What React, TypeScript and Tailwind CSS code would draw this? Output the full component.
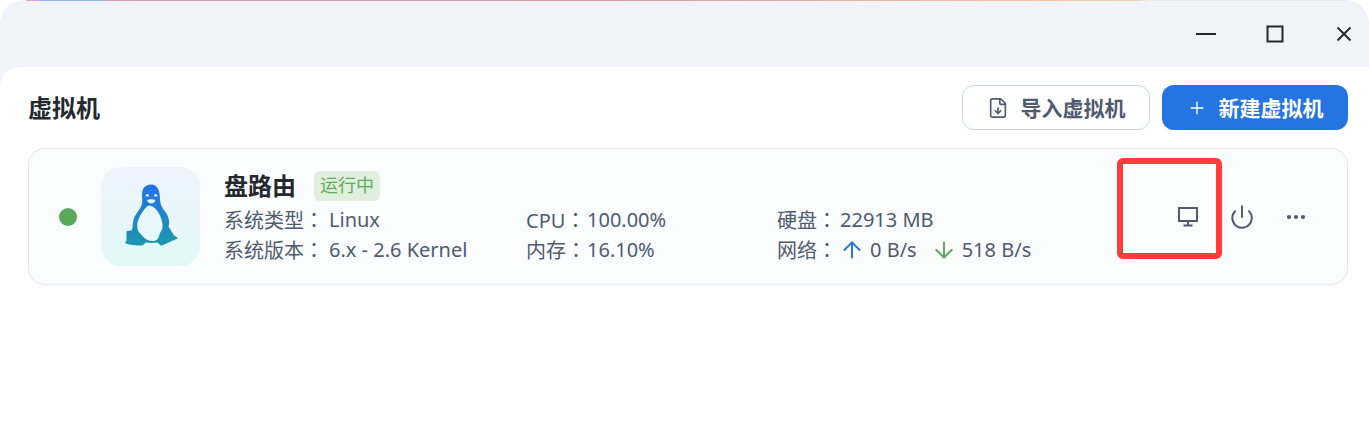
import { ArrowDown, ArrowUp, FileDown, MoreHorizontal, Plus, Power } from "lucide-react";

const FONT = "font-['Noto_Sans','Noto_Sans_CJK_SC',sans-serif]";

function PenguinIcon() {
  return (
    <svg width="70" height="75" viewBox="0 -0.5 70 75">
      <defs>
        <linearGradient id="penguin" x1="0" y1="0" x2="0" y2="1">
          <stop offset="0" stopColor="#2273e6" />
          <stop offset="1" stopColor="#1c97ae" />
        </linearGradient>
      </defs>
      <path
        fill="url(#penguin)"
        d="M35 5C28 5 26 10 26 16C26 20 27 23 25 27C22.5 32 18 36 17 43C16.5 46 17 49 15.5 51L10.5 51.5L10.5 61L9 63.5C12 65 20 66.5 26 66C28 65.5 28.5 63.5 30 63C33 63.5 37 63.5 41 63C43 64 44 66.5 46 66L61.5 59C62 58 60 57 58 56L55 51L52.5 47C54 43 53 39 50.5 34C47 29 44.5 27 44 20C44 12 42 5 35 5Z"
      />
      <path
        fill="#e8f7fb"
        d="M33 26C30 27 28 30 25.5 34C22 39 20.5 45 21.5 49.5C22.5 53 24.5 54 26.5 56.5C29 60 34 62 38 61.5C41 61 42.5 59 43 56.5C43.5 54 45 52 46 50C47.5 46 46 40 43.5 35C41 30 37 26 33 26Z"
      />
      <path fill="#e8f7fb" d="M29.5 17.5C29.5 15 31 14 32.5 15C32.8 16 32.5 17 32.5 17.5C31.5 16.5 30.5 16.5 29.5 17.5Z" />
      <path fill="#e8f7fb" d="M41.5 17.5C41.5 15 40 14 38.5 15C38.2 16 38.5 17 38.5 17.5C39.5 16.5 40.5 16.5 41.5 17.5Z" />
      <path fill="#e8f7fb" d="M31 20.5C33 19.5 37 19.5 39.5 20.5C39 22.5 37 24 35.2 24C33.5 24 31.5 22.5 31 20.5Z" />
    </svg>
  );
}

function MonitorIcon() {
  return (
    <svg width="22" height="20" viewBox="0 0 22 20" fill="none" stroke="currentColor" strokeWidth="2">
      <rect x="2" y="1" width="18" height="13" />
      <path d="M11 14V18.5M6.5 18.5H15.5" />
    </svg>
  );
}

function Colon() {
  return <span className="font-['Noto_Sans_CJK_TC',sans-serif]">：</span>;
}

function Info({ label, width, children }: { label: string; width: string; children: React.ReactNode }) {
  return (
    <div className="flex h-[30px] items-center whitespace-nowrap">
      <span className={width}>
        {label}
        <Colon />
      </span>
      {children}
    </div>
  );
}

export default function App() {
  return (
    <div className={`relative h-[447px] w-[1369px] overflow-hidden bg-white ${FONT}`}>
      <div className="absolute left-[26px] top-0 h-px w-[1320px] bg-[linear-gradient(90deg,#dca6d0_0,#dca6d0_1%,#8fb9ee_1%,#8fb9ee_6%,#d79ab4_6%,#dc9aa6_45%,#f0cfa8_84%,#ececec_85%,#ececec_100%)]" />
      <div className="flex h-[67px] justify-end rounded-t-[24px] bg-[#f0f3f8] pr-[17px] text-[#24292f]">
        <svg width="160" height="67" viewBox="0 0 160 67" fill="none" stroke="currentColor" strokeWidth="2">
          <path d="M4 34H24" />
          <rect x="75.5" y="26.5" width="15" height="15" />
          <path d="M145.5 27.5L158.5 40.5M158.5 27.5L145.5 40.5" />
        </svg>
      </div>
      <div className="bg-[#f0f3f8]">
        <div className="h-[380px] rounded-tl-[20px] bg-white pl-[28px] pr-[21px]">
          <div className="flex h-[81px] items-center justify-between">
            <h1 className="mt-[1px] text-[24px] font-bold leading-none text-[#24292f]">虚拟机</h1>
            <div className="flex gap-3">
              <button className="flex h-[45px] w-[188px] items-center justify-center gap-[12px] rounded-xl border border-[#cbd5e1] bg-white text-[21px] font-bold text-[#4f5b6e]">
                <FileDown className="h-[22px] w-[22px]" strokeWidth={1.8} />
                <span className="mt-[2px] leading-none">导入虚拟机</span>
              </button>
              <button className="flex h-[45px] w-[186px] items-center justify-center gap-[12px] rounded-xl bg-[#2474e2] text-[21px] font-bold text-white">
                <Plus className="h-[20px] w-[20px]" strokeWidth={1.6} />
                <span className="mt-[2px] leading-none">新建虚拟机</span>
              </button>
            </div>
          </div>
          <div className="flex h-[137px] items-center rounded-2xl border border-[#e2e8f0] bg-[#fbfcfe] pl-[30px] text-[20px] text-[#4f5b6e]">
            <span className="h-[18px] w-[18px] shrink-0 rounded-full bg-[#5ba85a]" />
            <div className="ml-[24px] flex h-[99px] w-[99px] shrink-0 items-center justify-center rounded-[20px] bg-[linear-gradient(180deg,#eef4fe,#e2f8f8)]">
              <PenguinIcon />
            </div>
            <div className="ml-[24px] flex-1">
              <div className="flex h-[37px] items-center gap-[18px] pb-[2px]">
                <span className="text-[24px] font-bold leading-none text-[#24292f]">盘路由</span>
                <span className="flex h-[30px] w-[66px] items-center justify-center rounded-md bg-[#dfeedd] text-[18px] text-[#5cad5a]">
                  运行中
                </span>
              </div>
              <div className="flex leading-[30px]">
                <div className="w-[302px]">
                  <Info label="系统类型" width="w-[105px]">Linux</Info>
                  <Info label="系统版本" width="w-[105px]">6.x - 2.6 Kernel</Info>
                </div>
                <div className="w-[251px]">
                  <Info label="CPU" width="w-[61px]">100.00%</Info>
                  <Info label="内存" width="w-[61px]">16.10%</Info>
                </div>
                <div>
                  <Info label="硬盘" width="w-[63px]">22913 MB</Info>
                  <div className="flex h-[30px] items-center whitespace-nowrap">
                    <span className="w-[62px]">
                      网络
                      <Colon />
                    </span>
                    <ArrowUp className="h-[26px] w-[26px] text-[#2474e2]" strokeWidth={1.8} />
                    <span className="ml-[5px]">0 B/s</span>
                    <ArrowDown className="ml-[14px] h-[26px] w-[26px] text-[#5ba85a]" strokeWidth={1.8} />
                    <span className="ml-[5px]">518 B/s</span>
                  </div>
                </div>
              </div>
            </div>
            <div className="flex items-center pr-[39px] text-[#4f5b6e]">
              <MonitorIcon />
              <Power className="ml-[30px] h-[26px] w-[26px]" strokeWidth={1.8} />
              <MoreHorizontal className="ml-[29px] h-[24px] w-[24px]" strokeWidth={2.2} />
            </div>
          </div>
        </div>
      </div>
      <div className="absolute left-[1117px] top-[158px] h-[101px] w-[105px] rounded-md border-[6px] border-[#ff3b3b]" />
    </div>
  );
}
